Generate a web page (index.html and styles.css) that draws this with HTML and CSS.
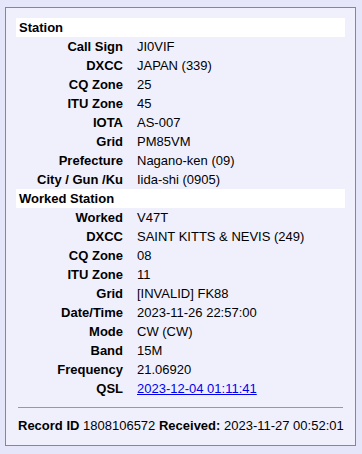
FILE: index.html
```html
<!DOCTYPE html>
<html lang="en">
<head>
<meta charset="utf-8">
<title>QSO Record</title>
<link rel="stylesheet" href="styles.css">
</head>
<body>
<div class="card">
  <div class="grid">
    <div class="section">Station</div>
    <div class="label">Call Sign</div><div class="value">JI0VIF</div>
    <div class="label">DXCC</div><div class="value">JAPAN (339)</div>
    <div class="label">CQ Zone</div><div class="value">25</div>
    <div class="label">ITU Zone</div><div class="value">45</div>
    <div class="label">IOTA</div><div class="value">AS-007</div>
    <div class="label">Grid</div><div class="value">PM85VM</div>
    <div class="label">Prefecture</div><div class="value">Nagano-ken (09)</div>
    <div class="label">City / Gun /Ku</div><div class="value">Iida-shi (0905)</div>
    <div class="section">Worked Station</div>
    <div class="label">Worked</div><div class="value">V47T</div>
    <div class="label">DXCC</div><div class="value">SAINT KITTS &amp; NEVIS (249)</div>
    <div class="label">CQ Zone</div><div class="value">08</div>
    <div class="label">ITU Zone</div><div class="value">11</div>
    <div class="label">Grid</div><div class="value">[INVALID] FK88</div>
    <div class="label">Date/Time</div><div class="value">2023-11-26 22:57:00</div>
    <div class="label">Mode</div><div class="value">CW (CW)</div>
    <div class="label">Band</div><div class="value">15M</div>
    <div class="label">Frequency</div><div class="value">21.06920</div>
    <div class="label">QSL</div><div class="value"><a href="#">2023-12-04 01:11:41</a></div>
  </div>
  <hr class="rule">
  <div class="footer"><b>Record ID</b> 1808106572 <b>Received:</b> 2023-11-27 00:52:01</div>
</div>
</body>
</html>
```

FILE: styles.css
```css
html, body {
  margin: 0;
  padding: 0;
  background: #e6e6fa;
}

body {
  padding: 7px 6px 8px 5px;
  font-family: "Liberation Sans", Arial, sans-serif;
  font-size: 13px;
  color: #000;
}

.card {
  width: 329px;
  border: 1px solid #888;
  background: #f0f0fd;
  padding: 10px;
}

.grid {
  display: grid;
  grid-template-columns: 107px 1fr;
  column-gap: 14px;
  grid-auto-rows: 19px;
  line-height: 19px;
}

.section {
  grid-column: 1 / -1;
  background: #fff;
  font-weight: bold;
  padding-left: 3px;
}

.label {
  text-align: right;
  font-weight: bold;
  white-space: nowrap;
}

.value {
  white-space: nowrap;
}

.value a {
  color: #0000ee;
}

.rule {
  margin: 9px 2px 8px;
  border: 0;
  border-top: 1px solid #999;
  height: 0;
}

.footer {
  line-height: 19px;
  padding-left: 2px;
  white-space: nowrap;
}
```
